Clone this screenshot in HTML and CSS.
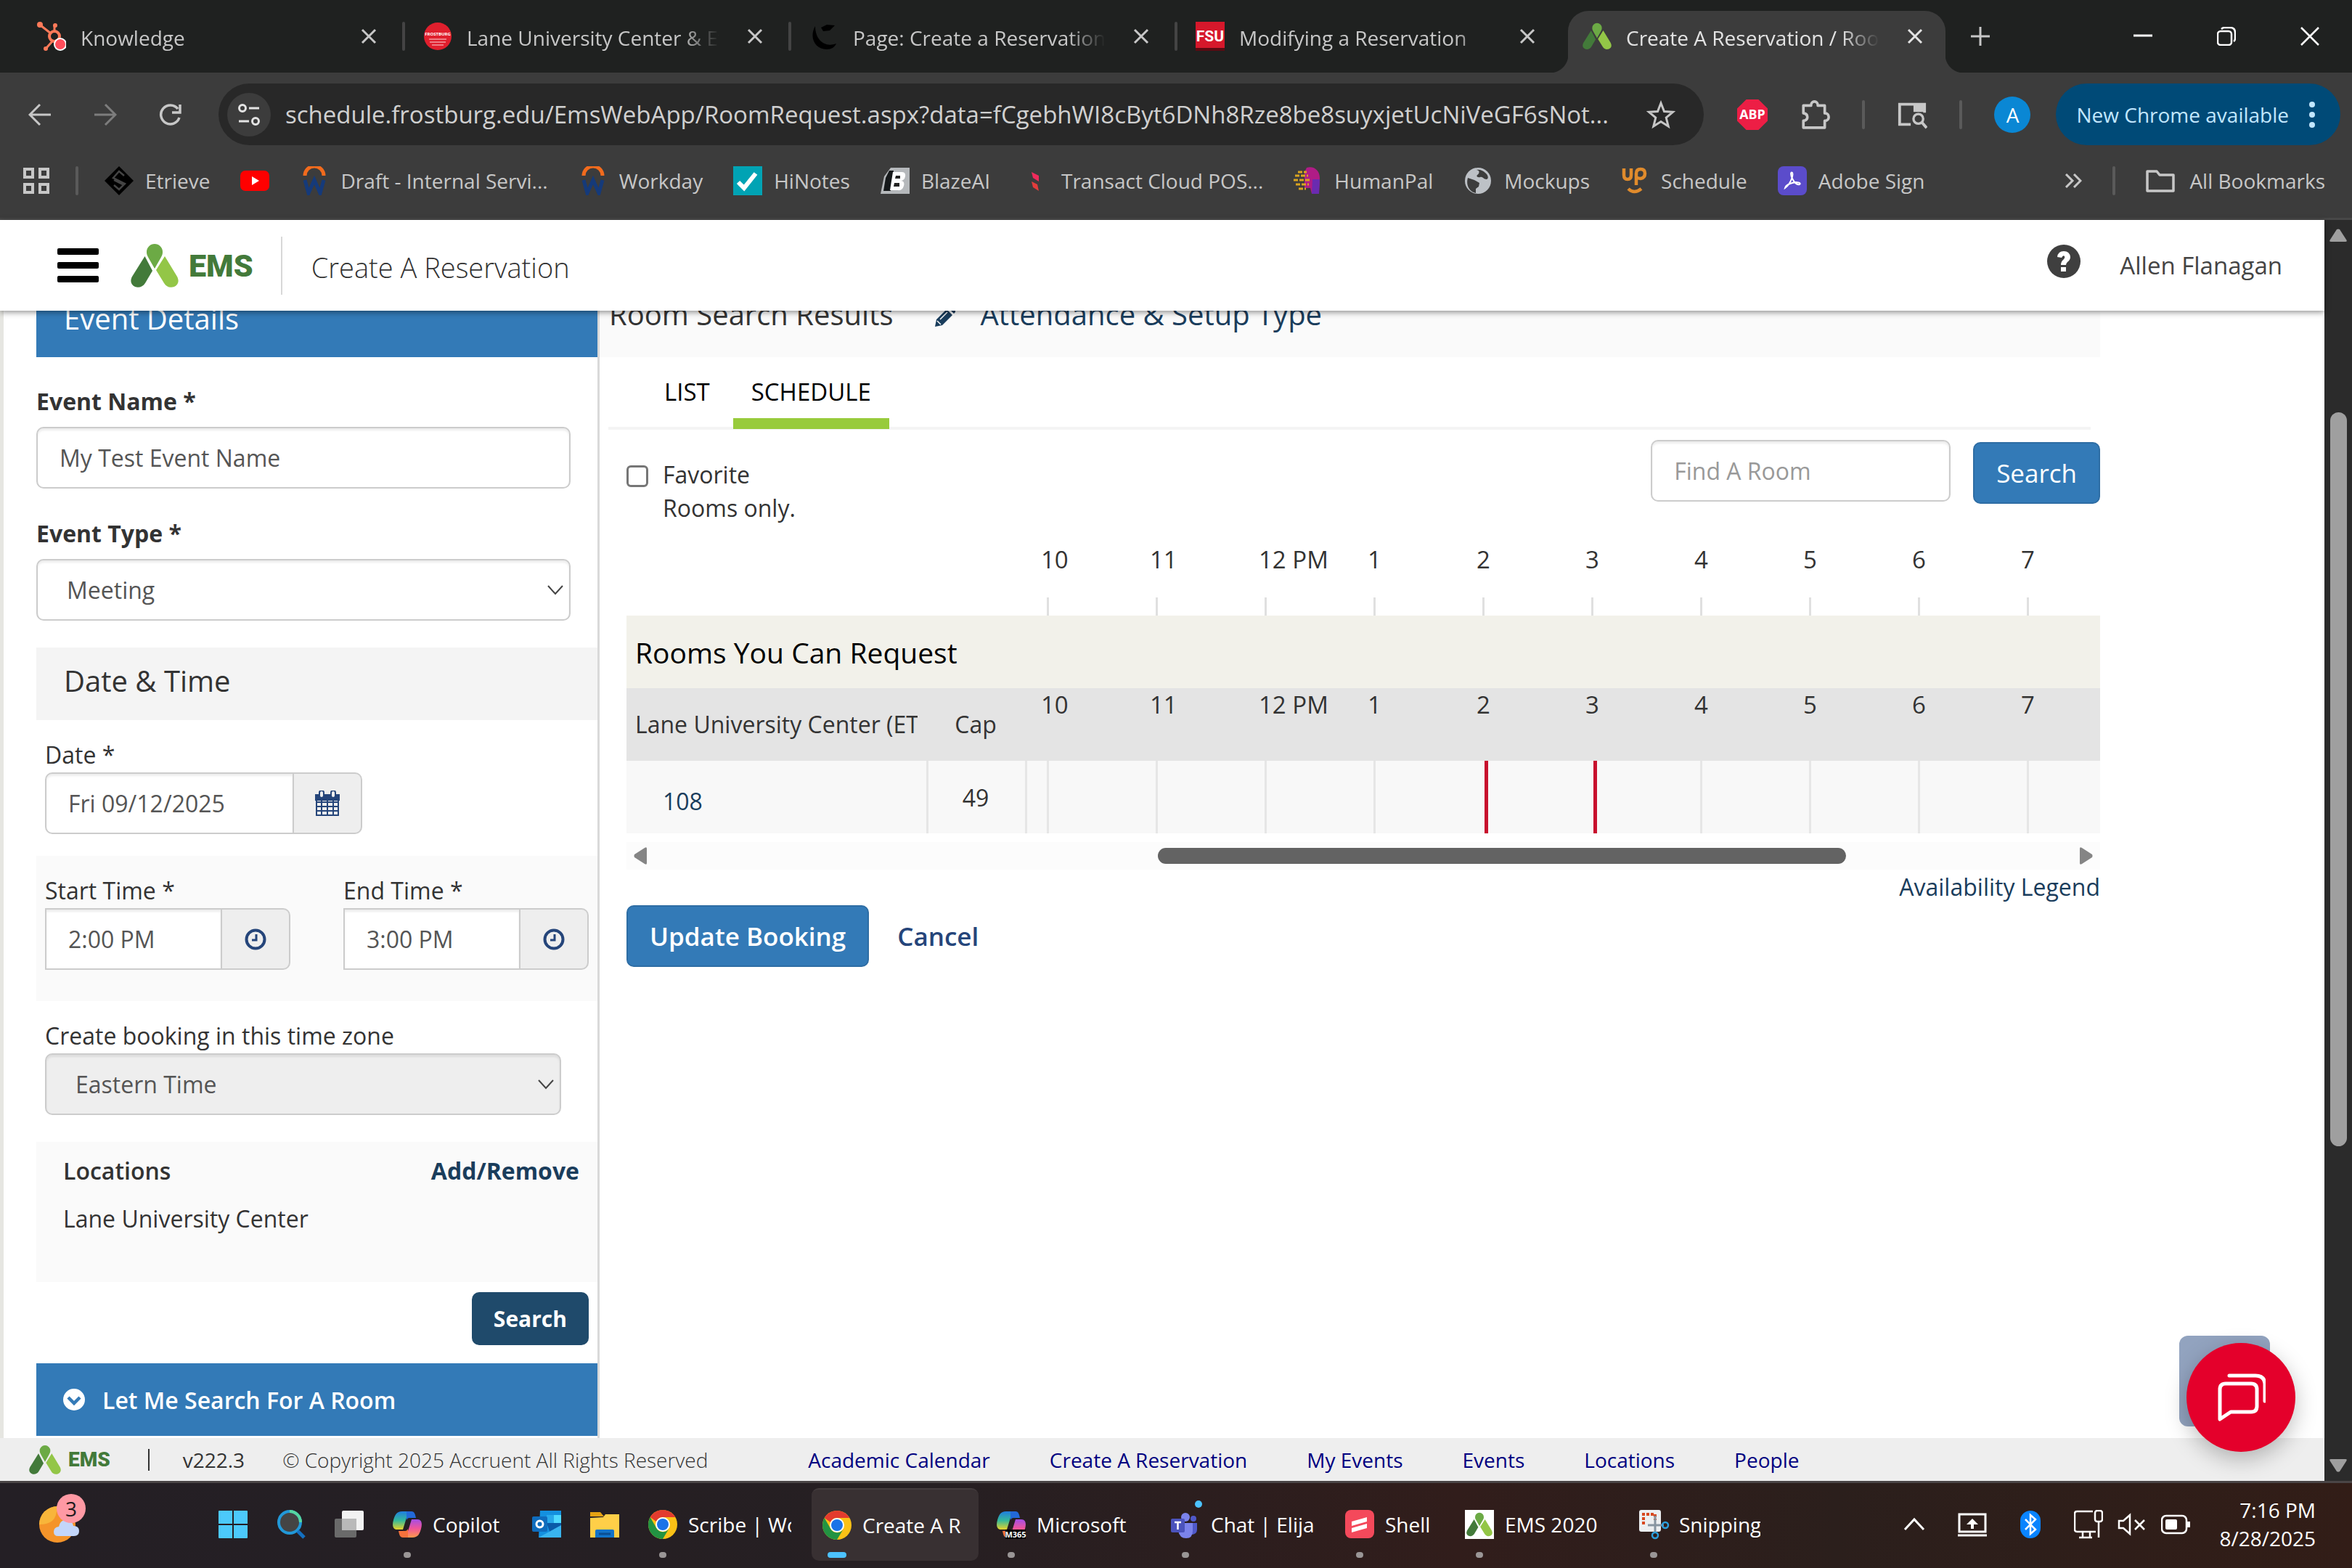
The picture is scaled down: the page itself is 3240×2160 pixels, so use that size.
FILE: index.html
```html
<!DOCTYPE html>
<html lang="en">
<head>
    <meta charset="UTF-8">
    <meta name="viewport" content="width=device-width, initial-scale=1.0">
    <title>Create A Reservation / Room Request</title>
    <link rel="stylesheet" href="styles.css">
</head>
<body>
    <!-- shared icons -->
    <svg class="defs" width="0" height="0" aria-hidden="true">
        <symbol id="ems" viewBox="0 0 66 60">
            <path fill="#6caa45" d="M22 11a11 11 0 0 1 22 0c0 4-1 5-3 9l-8 14-8-14c-2-4-3-5-3-9z"/>
            <path fill="#437a3a" d="M19.500 17 30 37 20 54c-3 5-9 7-14 5-6-3-7-8-4-14z"/>
            <path fill="#93c647" d="M47 17l17 28c3 6 2 11-4 14-6 2-11 0-14-5L35 36z"/>
        </symbol>
        <symbol id="close" viewBox="0 0 22 22">
            <path d="M2 2l18 18M20 2 2 20" stroke="currentColor" stroke-width="3" fill="none"/>
        </symbol>
        <symbol id="workday" viewBox="0 0 40 40">
            <path d="M7 13a13 13 0 0 1 26 0" stroke="#f26b1d" stroke-width="5" fill="none"/>
            <path d="M7 19l5 18 8-18 8 18 5-18" stroke="#153a7a" stroke-width="5" fill="none"/>
        </symbol>
        <symbol id="chrome" viewBox="0 0 40 40">
            <circle cx="20" cy="20" r="20" fill="#fbc116"/>
            <path fill="#e33b2e" d="M2.700 10A20 20 0 0 1 37.300 10H20a10 10 0 0 0-9 6z"/>
            <path fill="#229342" d="M2.700 10A20 20 0 0 0 20 40l9-15a10 10 0 0 1-17.700 0z"/>
            <circle cx="20" cy="20" r="10" fill="#fff"/>
            <circle cx="20" cy="20" r="8" fill="#1a73e8"/>
        </symbol>
        <symbol id="copilot" viewBox="0 0 40 40">
            <linearGradient id="cpA" x1="0" y1="0" x2="0" y2="1"><stop offset="0" stop-color="#1f7de0"/><stop offset=".5" stop-color="#35b99a"/><stop offset="1" stop-color="#e8d32a"/></linearGradient>
            <linearGradient id="cpB" x1="0" y1="0" x2="0" y2="1"><stop offset="0" stop-color="#a44ee6"/><stop offset=".5" stop-color="#f0559a"/><stop offset="1" stop-color="#ff9a4a"/></linearGradient>
            <path fill="url(#cpA)" d="M13 2h13c-5 2-6 6-8 12l-4 13H6c-6 0-7-6-5-13C3 7 5 2 13 2z"/>
            <path fill="#2269d8" d="M19 2h7c4 0 5 4 6 9h-9c-2 0-3 1-4 3z"/>
            <path fill="url(#cpB)" d="M27 38H14c5-2 6-6 8-12l4-13h8c6 0 7 6 5 13-2 7-4 12-12 12z"/>
            <path fill="#f5713c" d="M21 38h-7c-4 0-5-4-6-9h9c2 0 3-1 4-3z"/>
        </symbol>
        <symbol id="clock" viewBox="0 0 30 30">
            <circle cx="15" cy="15" r="12.500" stroke="currentColor" stroke-width="4" fill="none"/>
            <path d="M16 8v8h-6" stroke="currentColor" stroke-width="3" fill="none"/>
        </symbol>
        <symbol id="chevron" viewBox="0 0 22 14">
            <path d="M1 1l10 11L21 1" stroke="currentColor" stroke-width="2" fill="none"/>
        </symbol>
    </svg>

    <!-- browser tabs -->
    <div class="tabstrip">
        <div class="tab">
            <svg class="icon" viewBox="0 0 40 40"><g stroke="#ff7a59" fill="none"><path d="M5 5l14 11M24 14V5M21 27l-8 9" stroke-width="3"/><circle cx="24" cy="20" r="7" stroke-width="4"/></g><circle cx="4" cy="4" r="4" fill="#ff7a59"/><circle cx="25" cy="5" r="3" fill="#ff7a59"/><circle cx="12" cy="37" r="3" fill="#ff7a59"/><circle cx="32" cy="31" r="9" fill="#fff"/><circle cx="32" cy="31" r="7" fill="#ff4d5b"/></svg>
            <span class="tab-title">Knowledge</span>
            <button class="tab-close" aria-label="Close tab"><svg><use href="#close"/></svg></button>
        </div>
        <div class="tab">
            <svg class="icon" viewBox="0 0 40 40"><circle cx="20" cy="20" r="19" fill="#e01f2d"/><text x="20" y="19" text-anchor="middle" fill="#fff" class="mini">FROSTBURG</text><path d="M8 24h24M9 28h22M12 32h16" stroke="#f29aa0" stroke-width="1.500"/></svg>
            <span class="tab-title">Lane University Center &amp; Ev</span>
            <button class="tab-close" aria-label="Close tab"><svg><use href="#close"/></svg></button>
        </div>
        <div class="tab">
            <svg class="icon" viewBox="0 0 40 40"><path d="M8 6C-1 22 8 38 24 38c6 0 11-3 13-8-16 6-29-5-29-24zM16 8l8-4 11 1-7 7-9 1z" fill="#000"/></svg>
            <span class="tab-title">Page: Create a Reservation</span>
            <button class="tab-close" aria-label="Close tab"><svg><use href="#close"/></svg></button>
        </div>
        <div class="tab">
            <svg class="icon" viewBox="0 0 40 40"><path fill="#d6182b" d="M0 0h40v40H0z"/><path fill="#5c0a12" d="M0 36h40v4H0z"/><text x="20" y="27" text-anchor="middle" fill="#fff" class="fsu">FSU</text></svg>
            <span class="tab-title">Modifying a Reservation</span>
            <button class="tab-close" aria-label="Close tab"><svg><use href="#close"/></svg></button>
        </div>
        <div class="tab active">
            <svg class="icon"><use href="#ems"/></svg>
            <span class="tab-title">Create A Reservation / Roo</span>
            <button class="tab-close" aria-label="Close tab"><svg><use href="#close"/></svg></button>
        </div>
        <button class="new-tab" aria-label="New tab"><svg viewBox="0 0 26 26"><path d="M13 0v26M0 13h26" stroke="currentColor" stroke-width="3"/></svg></button>
        <div class="window-buttons">
            <button aria-label="Minimize"><svg viewBox="0 0 26 26"><path d="M0 12h26" stroke="#fff" stroke-width="3"/></svg></button>
            <button aria-label="Restore"><svg viewBox="0 0 26 26"><rect x="1" y="6" width="19" height="19" rx="4" stroke="#fff" stroke-width="2.500" fill="none"/><path d="M6 3q2-2 4-2h8q7 0 7 7v8q0 3-2 4" stroke="#fff" stroke-width="2.500" fill="none"/></svg></button>
            <button aria-label="Close"><svg viewBox="0 0 26 26"><path d="M1 1l24 24M25 1 1 25" stroke="#fff" stroke-width="2.500"/></svg></button>
        </div>
    </div>

    <!-- address bar -->
    <div class="toolbar">
        <button class="nav-button" aria-label="Back"><svg viewBox="0 0 32 32"><path d="M31 16H3M16 2 2 16l14 14" stroke="currentColor" stroke-width="3" fill="none"/></svg></button>
        <button class="nav-button off" aria-label="Forward"><svg viewBox="0 0 32 32"><path d="M1 16h28M16 2l14 14-14 14" stroke="currentColor" stroke-width="3" fill="none"/></svg></button>
        <button class="nav-button" aria-label="Reload"><svg viewBox="0 0 32 32"><path d="M28 20a13 13 0 1 1-2-12M29 2v11H18" stroke="currentColor" stroke-width="3.500" fill="none"/></svg></button>
        <div class="omnibox">
            <button class="site-info" aria-label="Site information"><svg viewBox="0 0 32 32"><g stroke="currentColor" stroke-width="3" fill="none"><circle cx="7" cy="7" r="4.500"/><path d="M16 7h14M2 25h14"/><circle cx="25" cy="25" r="4.500"/></g></svg></button>
            <input class="url" type="text" aria-label="Address" value="schedule.frostburg.edu/EmsWebApp/RoomRequest.aspx?data=fCgebhWI8cByt6DNh8Rze8be8suyxjetUcNiVeGF6sNot...">
            <button class="star" aria-label="Bookmark this tab"><svg viewBox="0 0 40 40"><path d="M20 4l4.500 11.500 12 .800-9.300 7.700 3 12L20 29.500 9.800 36l3-12-9.300-7.700 12-.800z" stroke="currentColor" stroke-width="3" fill="none"/></svg></button>
        </div>
        <div class="extensions">
            <button class="ext" aria-label="Adblock Plus"><svg viewBox="0 0 40 40"><path fill="#ed1e45" d="M12 0h16l12 12v16L28 40H12L0 28V12z"/><text x="20" y="26" font-size="17" text-anchor="middle" fill="#fff" class="abp">ABP</text></svg></button>
            <button class="ext" aria-label="Extensions"><svg viewBox="0 0 40 40"><path d="M5 8h10c0-7 9-7 9 0h9v10c7 0 7 10 0 10v9H5V28c7-1 7-9 0-10z" stroke="currentColor" stroke-width="3.500" fill="none" stroke-linejoin="round"/></svg></button>
            <span class="sep"></span>
            <button class="ext" aria-label="Lens"><svg viewBox="0 0 44 40"><path d="M20 34H4V5h36v12" stroke="currentColor" stroke-width="4" fill="none"/><path d="M24 5h17v11H24z" fill="currentColor"/><circle cx="31" cy="26" r="7" stroke="currentColor" stroke-width="3.500" fill="none"/><path d="M36 31l7 8" stroke="currentColor" stroke-width="4"/></svg></button>
            <span class="sep"></span>
            <button class="avatar">A</button>
        </div>
        <button class="update">New Chrome available <svg viewBox="0 0 8 36"><circle cx="4" cy="4" r="4"/><circle cx="4" cy="18" r="4"/><circle cx="4" cy="32" r="4"/></svg></button>
    </div>

    <!-- bookmarks -->
    <nav class="bookmarks">
        <button class="apps" aria-label="Apps"><svg viewBox="0 0 36 36"><path d="M2 2h11v11H2zM23 2h11v11H23zM2 23h11v11H2zM23 23h11v11H23z" stroke="currentColor" stroke-width="4" fill="none"/></svg></button>
        <span class="sep"></span>
        <a href="#"><svg class="icon" viewBox="0 0 40 40"><path fill="#000" d="M20 0l20 20-20 20L0 20z"/><path d="M27 13l-7-6-8 9 16 8-8 8-7-6M13 19l14 7" stroke="#444" stroke-width="2.500" fill="none"/></svg>Etrieve</a>
        <a href="#" aria-label="YouTube"><svg class="icon" viewBox="0 0 40 40"><rect y="6" width="40" height="28" rx="7" fill="#f00"/><path fill="#fff" d="M16 14l10 6-10 6z"/></svg></a>
        <a href="#"><svg class="icon"><use href="#workday"/></svg>Draft - Internal Servi...</a>
        <a href="#"><svg class="icon"><use href="#workday"/></svg>Workday</a>
        <a href="#"><svg class="icon" viewBox="0 0 40 40"><path fill="#00a3b4" d="M0 0h40v40H0z"/><path d="M7 22l8 8 16-20" stroke="#fff" stroke-width="6" fill="none"/></svg>HiNotes</a>
        <a href="#"><svg class="icon" viewBox="0 0 40 40"><path fill="#b5b8bb" d="M14 2h26v36H0l5-24z"/><path fill="#15181a" d="M12 6h6l-4 28H4l3-18z"/><path d="M17 8h12q6 0 5 6t-7 6q7 0 5 7t-8 6H13z" fill="#fff"/><path d="M21 13h6v4h-7zM19 23h7v5h-8z" fill="#222"/></svg>BlazeAI</a>
        <a href="#"><svg class="icon" viewBox="0 0 40 40"><path fill="#ef2b5b" d="M15 8l10 5v8l-8-5z"/><path fill="#e23c3c" d="M15 21l8 4 2 9-8-5z"/></svg>Transact Cloud POS...</a>
        <a href="#"><svg class="icon" viewBox="0 0 40 40"><path fill="#b01c86" d="M18 2c10-3 18 4 18 14 0 7-1 14-1 22H25l-2-8h-8V8z"/><path fill="#6a2bb0" d="M26 18h10l-1 20H25z"/><path d="M2 13h18M0 19h22M3 25h18M6 8h12M7 31h10" stroke="#d9a420" stroke-width="3" stroke-dasharray="6 2"/></svg>HumanPal</a>
        <a href="#"><svg class="icon" viewBox="0 0 40 40"><circle cx="20" cy="20" r="18" fill="#bdc1c6"/><path fill="#3c3c3c" d="M6 16l9 3 7 4-1 5-4 3v6C8 35 3 26 6 16zM18 5c6 1 3 6 1 7-2 2 1 4 4 3 4-1 4 3 9 3 3-1 2-6-2-9-3-3-8-5-12-4z"/></svg>Mockups</a>
        <a href="#"><svg class="icon" viewBox="0 0 40 40"><path d="M5 3v9q0 6 5 6t5-6V3M22 26V10q0-6 6-6t6 6-6 7q-3 0-6-2M11 31q8 8 18 0" stroke="#e08b2c" stroke-width="4.500" fill="none"/></svg>Schedule</a>
        <a href="#"><svg class="icon" viewBox="0 0 40 40"><rect width="40" height="40" rx="8" fill="#5b4ccb"/><path d="M10 30c6-4 12-16 10-21-2-2-3 2 0 8s6 9 10 8c3-2-4-4-10-2s-9 3-10 7z" stroke="#fff" stroke-width="2" fill="none"/></svg>Adobe Sign</a>
        <div class="bookmarks-end">
            <button aria-label="More bookmarks"><svg class="more" viewBox="0 0 24 20"><path d="M2 1l9 9-9 9M13 1l9 9-9 9" stroke="currentColor" stroke-width="3" fill="none"/></svg></button>
            <span class="sep"></span>
            <a href="#"><svg class="icon" viewBox="0 0 40 40"><path d="M2 7h13l4 5h19v22H2z" stroke="currentColor" stroke-width="3.500" fill="none" stroke-linejoin="round"/></svg>All Bookmarks</a>
        </div>
    </nav>

    <div class="window">
        <div class="page">
            <header class="header">
                <button class="menu" aria-label="Menu"><span></span><span></span><span></span></button>
                <a class="brand" href="#"><svg><use href="#ems"/></svg>EMS</a>
                <h1>Create A Reservation</h1>
                <button class="help" aria-label="Help"><svg viewBox="0 0 46 46"><circle cx="23" cy="23" r="23" fill="#3f3f3f"/><path d="M14 17q1-8 9-8t9 8q0 4-4 7-2 2-2 4h-7q0-5 4-8 2-2 1-4-2-2-4 2zM19 31h7v6h-7z" fill="#fff"/></svg></button>
                <a class="user" href="#">Allen Flanagan</a>
            </header>

            <div class="content">
                <aside class="sidebar">
                    <h2 class="bar bar-top">Event Details</h2>

                    <div class="fields">
                        <label class="strong" for="event-name">Event Name *</label>
                        <input class="control" id="event-name" type="text" value="My Test Event Name">
                        <label class="strong" for="event-type">Event Type *</label>
                        <div class="select">
                            <select class="control" id="event-type"><option>Meeting</option></select>
                            <svg><use href="#chevron"/></svg>
                        </div>
                    </div>

                    <h2 class="subhead">Date &amp; Time</h2>

                    <div class="block block-date">
                        <label for="date">Date *</label>
                        <div class="group group-date">
                            <input class="control" id="date" type="text" value="Fri 09/12/2025">
                            <button aria-label="Pick a date"><svg viewBox="0 0 34 36"><path d="M2 8h30v26H2zM2 16h30M2 22h30M2 28h30M9 14v20M17 14v20M25 14v20" stroke="currentColor" stroke-width="2" fill="none"/><path d="M0 5h34v9H0z" fill="currentColor"/><rect x="6" y="0" width="6" height="10" rx="3" fill="#eee" stroke="currentColor" stroke-width="2"/><rect x="22" y="0" width="6" height="10" rx="3" fill="#eee" stroke="currentColor" stroke-width="2"/></svg></button>
                        </div>
                    </div>

                    <div class="block block-time shaded">
                        <div>
                            <label for="start">Start Time *</label>
                            <div class="group">
                                <input class="control" id="start" type="text" value="2:00 PM">
                                <button aria-label="Pick start time"><svg class="clock"><use href="#clock"/></svg></button>
                            </div>
                        </div>
                        <div>
                            <label for="end">End Time *</label>
                            <div class="group">
                                <input class="control" id="end" type="text" value="3:00 PM">
                                <button aria-label="Pick end time"><svg class="clock"><use href="#clock"/></svg></button>
                            </div>
                        </div>
                    </div>

                    <div class="block block-zone">
                        <label for="zone">Create booking in this time zone</label>
                        <div class="select">
                            <select class="control" id="zone" disabled><option>Eastern Time</option></select>
                            <svg><use href="#chevron"/></svg>
                        </div>
                    </div>

                    <div class="locations shaded">
                        <div class="locations-head">
                            <span>Locations</span>
                            <a href="#">Add/Remove</a>
                        </div>
                        <p>Lane University Center</p>
                    </div>

                    <div class="sidebar-actions"><button class="search-dark">Search</button></div>

                    <button class="bar bar-bottom">
                        <svg viewBox="0 0 30 30"><circle cx="15" cy="15" r="15" fill="#fff"/><path d="M7 12l8 8 8-8" stroke="#337ab7" stroke-width="4.500" fill="none"/></svg>
                        Let Me Search For A Room
                    </button>
                </aside>

                <main class="results">
                    <div class="results-head">
                        <h2>Room Search Results</h2>
                        <a href="#"><svg viewBox="0 0 28 28"><path d="M0 28l2-10L16 4l8 8L10 26zM18 2l2-2q2-1 4 1l3 3q2 2 1 4l-2 2z" fill="currentColor"/><path d="M3 20l5 5M7 18 17 8" stroke="#fafafa" stroke-width="1.500"/></svg>Attendance &amp; Setup Type</a>
                    </div>

                    <div class="view-tabs">
                        <button>LIST</button>
                        <button class="selected">SCHEDULE</button>
                    </div>

                    <div class="results-body">
                        <div class="filters">
                            <input id="favorites" type="checkbox">
                            <label for="favorites">Favorite<br>Rooms only.</label>
                            <input class="control find" type="text" placeholder="Find A Room" aria-label="Find A Room">
                            <button class="primary">Search</button>
                        </div>

                        <table class="schedule">
                            <colgroup><col class="c-room"><col class="c-cap"><col class="c-pad"><col span="9" class="c-hour"><col></colgroup>
                            <tr class="ruler">
                                <td></td><td></td><td></td>
                                <th>10</th><th>11</th><th>12 PM</th><th>1</th><th>2</th><th>3</th><th>4</th><th>5</th><th>6</th><th>7</th>
                            </tr>
                            <tr class="section"><th colspan="13">Rooms You Can Request</th></tr>
                            <tr class="building">
                                <th class="name"><div>Lane University Center (ET)</div></th><th class="cap">Cap</th><td></td>
                                <th>10</th><th>11</th><th>12 PM</th><th>1</th><th>2</th><th>3</th><th>4</th><th>5</th><th>6</th><th>7</th>
                            </tr>
                            <tr class="room">
                                <td class="name"><a href="#">108</a></td><td class="cap">49</td><td class="pad"></td>
                                <td></td><td></td><td></td><td></td><td class="mark"></td><td class="mark"></td><td></td><td></td><td></td><td></td>
                            </tr>
                        </table>

                        <div class="hscroll">
                            <svg viewBox="0 0 18 24"><path d="M18 2v20q0 3-3 1L1 14q-1-2 0-4L15 1q3-2 3 1z"/></svg>
                            <div class="hscroll-track"><div class="hscroll-thumb"></div></div>
                            <svg viewBox="0 0 18 24"><path d="M0 2v20q0 3 3 1l14-9q1-2 0-4L3 1Q0-1 0 2z"/></svg>
                        </div>

                        <p class="legend"><a href="#">Availability Legend</a></p>

                        <div class="actions">
                            <button class="primary booking">Update Booking</button>
                            <a href="#">Cancel</a>
                        </div>
                    </div>
                </main>
            </div>

            <footer class="footer">
                <a class="brand small" href="#"><svg><use href="#ems"/></svg>EMS</a>
                <span class="rule"></span>
                <span class="version">v222.3</span>
                <span class="copyright">© Copyright 2025 Accruent All Rights Reserved</span>
                <nav>
                    <a href="#">Academic Calendar</a>
                    <a href="#">Create A Reservation</a>
                    <a href="#">My Events</a>
                    <a href="#">Events</a>
                    <a href="#">Locations</a>
                    <a href="#">People</a>
                </nav>
            </footer>

            <!-- floating buttons over the page corner -->
            <div class="to-top"></div>
            <button class="chat" aria-label="Chat"><svg viewBox="0 0 68 68"><path d="M5 64V23q0-8 8-8h35q8 0 8 8v23q0 8-8 8H20zM18 4h36q13 0 13 13v22" stroke="#fff" stroke-width="5" fill="none" stroke-linejoin="round" stroke-linecap="round"/></svg></button>
        </div>

        <div class="vscroll">
            <svg viewBox="0 0 24 18"><path d="M2 18h20q3 0 1-3L14 1q-2-1-4 0L1 15q-2 3 1 3z"/></svg>
            <div class="vscroll-thumb"></div>
            <svg viewBox="0 0 24 18"><path d="M2 0h20q3 0 1 3l-9 14q-2 1-4 0L1 3q-2-3 1-3z"/></svg>
        </div>
    </div>

    <!-- taskbar -->
    <div class="taskbar">
        <button class="weather" aria-label="Weather">
            <svg viewBox="0 0 56 52"><circle cx="25" cy="26" r="25" fill="#f5942a"/><path fill="#f8b53a" d="M25 1a25 25 0 0 0-25 25q12 0 18-5t7-20z"/><path fill="#c3d6fa" d="M26 42q-6 0-6-6t7-7q2-10 11-9 8 1 9 8 8 0 8 7t-7 7z"/></svg>
            <span class="badge">3</span>
        </button>
        <div class="tasks">
            <button class="task" aria-label="Start"><svg viewBox="0 0 40 40"><path fill="#4cc9fb" d="M0 2 q0-1 1-1h18v18H0zM21 1h18q1 0 1 1v17H21zM0 21h19v18H1q-1 0-1-1zM21 21h19v17q0 1-1 1H21z"/></svg></button>
            <button class="task" aria-label="Search"><svg viewBox="0 0 40 40"><circle cx="18" cy="17" r="15" fill="#444" stroke="#2298d8" stroke-width="4"/><path d="M18 2a15 15 0 0 1 15 15" stroke="#55d6a0" stroke-width="4" fill="none"/><path d="M29 29l9 9" stroke="#1470c0" stroke-width="5"/></svg></button>
            <button class="task" aria-label="Task view"><svg viewBox="0 0 40 40"><rect y="12" width="30" height="26" rx="2" fill="#6a6a6a"/><rect x="10" y="1" width="30" height="27" rx="2" fill="#f2f2f2"/><path fill="#b9b9b9" d="M10 12h20v16H10z"/></svg></button>
            <button class="task short run"><svg><use href="#copilot"/></svg><span>Copilot</span></button>
            <button class="task" aria-label="Outlook"><svg viewBox="0 0 40 40"><path fill="#1490df" d="M11 1h29v37H9z"/><path fill="#28a8ea" d="M20 7h10v11H20z"/><path fill="#50d9ff" d="M30 7h10v11H30z"/><path fill="#0a5aa8" d="M20 18h20v8L25 32z"/><path fill="#39b4ef" d="M9 38h31V21z"/><rect y="9" width="21" height="21" rx="2" fill="#0f6cbd"/><circle cx="10.500" cy="19.500" r="4.500" stroke="#fff" stroke-width="3" fill="none"/></svg></button>
            <button class="task" aria-label="File Explorer"><svg viewBox="0 0 40 40"><path fill="#e5a213" d="M0 3h14l5 6H0z"/><path fill="#ffcf48" d="M0 11l18-1 3-4h19v32H0z"/><path fill="#1173c9" d="M7 38V29q0-2 2-2h22q2 0 2 2v9z"/><path d="M12 33h16" stroke="#0b4e92" stroke-width="3"/></svg></button>
            <button class="task wide run"><svg><use href="#chrome"/></svg><span>Scribe | Wo</span></button>
            <button class="task wide run current"><svg><use href="#chrome"/></svg><span>Create A R</span></button>
            <button class="task wide run"><svg viewBox="0 0 40 40"><use href="#copilot"/><path fill="#000" d="M12 27h28v13H12z"/><text x="26" y="38" font-size="11" text-anchor="middle" fill="#fff" class="abp">M365</text></svg><span>Microsoft</span></button>
            <button class="task wide run"><svg viewBox="0 0 40 40"><circle cx="20" cy="10" r="6" fill="#7b83eb"/><circle cx="31" cy="12" r="4" fill="#5059c9"/><path fill="#5059c9" d="M24 18h12v9q0 7-8 7z"/><path fill="#7b83eb" d="M10 18h20v11q0 10-9 10T10 29z"/><rect y="12" width="19" height="19" rx="2" fill="#4b53bc"/><path d="M5 17h9M9.500 17v10" stroke="#fff" stroke-width="2.500"/><circle cx="38" cy="-8" r="5" fill="#4cc2ff"/></svg><span>Chat | Elija</span></button>
            <button class="task mid run"><svg viewBox="0 0 40 40"><rect width="40" height="39" rx="8" fill="#f4495b"/><path d="M9 16l21-6v6L9 22zM9 25l21-6v6L9 31z" fill="#fff"/></svg><span>Shell</span></button>
            <button class="task wide run"><svg viewBox="0 0 40 40"><path fill="#fff" d="M0 0h40v40H0z"/><use href="#ems" x="2" y="3" width="36" height="34"/></svg><span>EMS 2020</span></button>
            <button class="task last run"><svg viewBox="0 0 40 40"><rect width="30" height="30" rx="3" fill="#eceff1"/><path d="M6 20V6h16v8" stroke="#d8481f" stroke-width="4" stroke-dasharray="4 2" fill="none"/><path d="M22 8v22M12 21h22" stroke="#8795a1" stroke-width="3"/><circle cx="22" cy="35" r="4" stroke="#2c9fdc" stroke-width="2.500" fill="none"/><circle cx="36" cy="21" r="4" stroke="#2c9fdc" stroke-width="2.500" fill="none"/></svg><span>Snipping</span></button>
        </div>
        <div class="tray">
            <button aria-label="Hidden icons"><svg viewBox="0 0 40 40"><path d="M7 27l13-14 13 14" stroke="#fff" stroke-width="3" fill="none"/></svg></button>
            <button aria-label="Display"><svg viewBox="0 0 40 40"><path d="M2 6h36v24H2zM0 35h40" stroke="#fff" stroke-width="3" fill="none"/><path fill="#fff" d="M20 12l8 8h-6v6h-4v-6h-6z"/></svg></button>
            <button aria-label="Bluetooth"><svg viewBox="0 0 40 40"><rect x="6" y="1" width="28" height="38" rx="14" fill="#0a84ff"/><path d="M13 13l14 14-7 6V7l7 6-14 14" stroke="#fff" stroke-width="2.500" fill="none"/></svg></button>
            <button class="status" aria-label="Network, volume, battery">
                <svg viewBox="0 0 40 40"><path d="M26 2H4q-3 0-3 3v22q0 3 3 3h26M12 30v8M22 30v8M7 38h18M34 16v22" stroke="#fff" stroke-width="2.500" fill="none"/><rect x="29" y="1" width="10" height="15" rx="3" stroke="#fff" stroke-width="2.500" fill="none"/></svg>
                <svg viewBox="0 0 40 40"><path d="M2 15h6l9-8v26l-9-8H2zM24 14l13 13M37 14 24 27" stroke="#fff" stroke-width="2.500" fill="none"/></svg>
                <svg viewBox="0 0 40 40"><rect x="1" y="8" width="34" height="24" rx="6" stroke="#fff" stroke-width="2.500" fill="none"/><rect x="6" y="13" width="16" height="14" rx="2" fill="#fff"/><path d="M38 16v8" stroke="#fff" stroke-width="4"/></svg>
            </button>
            <div class="time">7:16 PM<br>8/28/2025</div>
        </div>
    </div>
</body>
</html>
```

FILE: styles.css
```css
* {
    box-sizing: border-box;
}

body {
    margin: 0;
    height: 100vh;
    display: flex;
    flex-direction: column;
    overflow: hidden;
    font-family: "Open Sans", "Noto Sans", sans-serif;
    font-size: 32px;
    color: #333;
    background-color: #fff;
}

button, input, select {
    font: inherit;
    color: inherit;
    margin: 0;
}

button {
    background: none;
    border: none;
    padding: 0;
    cursor: pointer;
}

a {
    text-decoration: none;
    color: #1a3d5c;
}

h1, h2, p {
    margin: 0;
    font-weight: 400;
}

svg {
    display: block;
    flex: none;
}

.defs {
    position: absolute;
}

.icon {
    width: 40px;
    height: 40px;
}

.mini {
    font-weight: 700;
    font-size: 6px;
}

.fsu {
    font: 700 21px "Roboto", sans-serif;
}

.abp {
    font-weight: 700;
}

.sep {
    width: 4px;
    height: 40px;
    border-radius: 2px;
    background-color: #5a5a5a;
}

/* browser chrome */
.tabstrip {
    height: 100px;
    flex: none;
    display: flex;
    background-color: #1f2120;
    color: #c7c7c7;
    font-size: 28px;
}

.tab {
    width: 532px;
    height: 100px;
    display: flex;
    align-items: center;
    gap: 20px;
    padding: 0 13px 0 51px;
    position: relative;
}

.tab:not(.active)::after {
    content: "";
    position: absolute;
    right: -26px;
    top: 30px;
    width: 4px;
    height: 40px;
    border-radius: 2px;
    background-color: #444;
}

.tab:nth-child(4)::after {
    display: none;
}

.tab-title {
    flex: 1;
    padding-top: 3px;
    margin-right: 18px;
    overflow: hidden;
    white-space: nowrap;
    mask-image: linear-gradient(90deg, #000 85%, transparent);
}

.tab-close svg {
    width: 22px;
    height: 22px;
}

.tab.active {
    height: 85px;
    width: 520px;
    margin-top: 15px;
    margin-left: 32px;
    padding: 0 31px 15px 20px;
    border-radius: 28px 28px 0 0;
    background-color: #3c3c3c;
    color: #e3e3e3;
}

.tab.active::before, .tab.active::after {
    content: "";
    position: absolute;
    bottom: 0;
    width: 25px;
    height: 25px;
}

.tab.active::before {
    left: -25px;
    background: radial-gradient(circle at 0 0, #1f2120 25px, #3c3c3c 26px);
}

.tab.active::after {
    right: -25px;
    background: radial-gradient(circle at 100% 0, #1f2120 25px, #3c3c3c 26px);
}

.new-tab {
    margin-left: 35px;
}

.new-tab svg, .window-buttons svg {
    width: 26px;
    height: 26px;
}

.window-buttons {
    display: flex;
    gap: 89px;
    margin-left: auto;
    margin-right: 45px;
}

.toolbar {
    height: 115px;
    flex: none;
    display: flex;
    align-items: center;
    padding: 0 16px 0 39px;
    background-color: #3c3c3c;
    color: #c7c7c7;
}

.nav-button {
    margin-right: 58px;
}

.nav-button svg {
    width: 32px;
    height: 32px;
}

.nav-button.off {
    color: #7d7d7d;
}

.omnibox {
    flex: 1;
    height: 85px;
    margin-left: -8px;
    display: flex;
    align-items: center;
    padding: 0 39px 0 12px;
    border-radius: 43px;
    background-color: #282828;
}

.site-info {
    width: 60px;
    height: 60px;
    display: grid;
    place-items: center;
    border-radius: 50%;
    background-color: #3c3c3c;
    color: #e3e3e3;
}

.site-info svg {
    width: 32px;
    height: 32px;
}

.url {
    flex: 1;
    min-width: 0;
    padding: 0 0 0 20px;
    border: none;
    background: none;
    font-size: 33px;
    color: #d0d0d0;
    text-overflow: ellipsis;
}

.star svg {
    width: 40px;
    height: 40px;
}

.extensions {
    display: flex;
    align-items: center;
    gap: 44px;
    padding: 0 35px 0 46px;
}

.ext svg {
    width: 42px;
    height: 42px;
}

.avatar {
    width: 50px;
    height: 50px;
    border-radius: 50%;
    background-color: #0a87d4;
    color: #fff;
    font-size: 28px;
}

.update {
    height: 85px;
    display: flex;
    align-items: center;
    gap: 28px;
    padding: 0 35px 0 28px;
    border-radius: 43px;
    background-color: #004a77;
    color: #c2e7ff;
    font-size: 28px;
}

.update svg {
    width: 8px;
    height: 36px;
    fill: currentColor;
}

.bookmarks {
    height: 88px;
    flex: none;
    display: flex;
    align-items: center;
    padding: 0 37px 18px 32px;
    background-color: #3c3c3c;
    border-bottom: 3px solid #484848;
    color: #c7c7c7;
    font-size: 28px;
}

.bookmarks a {
    display: flex;
    align-items: center;
    gap: 16px;
    margin-right: 42px;
    color: inherit;
    white-space: nowrap;
}

.apps svg {
    width: 36px;
    height: 36px;
}

.bookmarks > .sep {
    margin: 0 36px;
}

.bookmarks-end {
    display: flex;
    align-items: center;
    gap: 42px;
    margin-left: auto;
}

.bookmarks-end a {
    gap: 20px;
    margin-right: 0;
}

.more {
    width: 24px;
    height: 20px;
}

/* page */
.window {
    flex: 1;
    min-height: 0;
    display: flex;
}

.page {
    flex: 1;
    min-width: 0;
    display: flex;
    flex-direction: column;
    position: relative;
}

.header {
    height: 125px;
    flex: none;
    display: flex;
    align-items: center;
    padding: 0 58px 0 79px;
    background-color: #fff;
    box-shadow: 0 2px 8px rgba(0, 0, 0, 0.45);
    z-index: 1;
}

.menu {
    display: flex;
    flex-direction: column;
    gap: 10px;
    margin-right: 44px;
}

.menu span {
    width: 57px;
    height: 9px;
    border-radius: 2px;
    background-color: #000;
}

.brand {
    display: flex;
    align-items: center;
    gap: 14px;
    color: #437a3a;
    font: 900 43px "Roboto", sans-serif;
}

.brand svg {
    width: 66px;
    height: 60px;
}

.brand.small {
    gap: 10px;
    font-size: 28px;
}

.brand.small svg {
    width: 44px;
    height: 40px;
}

.header h1 {
    margin-left: 38px;
    padding: 4px 0 0 40px;
    border-left: 2px solid #d8d8d8;
    font-size: 38px;
    font-weight: 300;
    line-height: 76px;
}

.help {
    margin-left: auto;
    margin-right: 54px;
    padding-bottom: 12px;
}

.help svg {
    width: 46px;
    height: 46px;
}

.user {
    color: #444;
    font-size: 33px;
}

.content {
    flex: 1;
    min-height: 0;
    display: flex;
    margin-top: -36px;
    overflow: hidden;
}

.sidebar {
    width: 826px;
    flex: none;
    padding-left: 45px;
    border-left: 5px solid #e6e6e1;
    border-right: 3px solid #d9d9d9;
}

.bar {
    width: 100%;
    height: 100px;
    display: flex;
    align-items: center;
    background-color: #337ab7;
    color: #fff;
}

.bar-top {
    padding: 0 38px 8px;
    font-size: 40px;
}

.bar-bottom {
    gap: 24px;
    padding: 0 37px;
    font-weight: 600;
}

.bar-bottom svg {
    width: 30px;
    height: 30px;
}

.fields {
    padding: 36px 37px 37px 0;
}

.fields label {
    display: block;
    margin-bottom: 10px;
    line-height: 50px;
}

.fields .control + label {
    margin-top: 37px;
}

.strong {
    font-weight: 700;
}

.control {
    display: block;
    width: 100%;
    height: 85px;
    padding: 0 30px;
    border: 2px solid #ccc;
    border-radius: 10px;
    background-color: #fff;
    box-shadow: inset 0 3px 3px rgba(0, 0, 0, 0.075);
    color: #555;
}

.select {
    position: relative;
}

.select select {
    appearance: none;
    padding: 0 40px;
    opacity: 1;
}

.select select:disabled {
    background-color: #eee;
}

.select svg {
    position: absolute;
    right: 10px;
    top: 36px;
    width: 22px;
    height: 14px;
    color: #444;
}

.subhead {
    height: 100px;
    padding-left: 38px;
    background-color: #f4f4f4;
    font-size: 40px;
    line-height: 92px;
}

.shaded {
    background-color: #fafafa;
}

.block {
    padding: 24px 12px 0 12px;
}

.block label {
    display: block;
    line-height: 48px;
}

.block-date {
    padding-bottom: 30px;
}

.block-time {
    display: flex;
    justify-content: space-between;
    padding-bottom: 43px;
}

.block-zone {
    padding-right: 50px;
    padding-bottom: 37px;
}

.group {
    display: flex;
    width: 338px;
}

.group-date {
    width: 437px;
}

.group .control {
    flex: 1;
    min-width: 0;
    border-radius: 0;
}

.group-date .control {
    border-radius: 10px 0 0 10px;
}

.group button {
    width: 94px;
    display: grid;
    place-items: center;
    border: 2px solid #ccc;
    border-left: none;
    border-radius: 0 10px 10px 0;
    background-color: #eee;
    color: #25457a;
}

.group svg {
    width: 34px;
    height: 36px;
}

.group .clock {
    width: 30px;
    height: 30px;
}

.locations {
    padding: 16px 25px 63px 37px;
    line-height: 48px;
}

.locations-head {
    display: flex;
    justify-content: space-between;
    margin-bottom: 18px;
    font-weight: 600;
}

.locations-head a {
    font-weight: 700;
}

.sidebar-actions {
    padding: 14px 12px 25px 0;
    text-align: right;
}

.search-dark {
    height: 73px;
    padding: 0 30px;
    border-radius: 10px;
    background-color: #1f4a6b;
    color: #fff;
    font-size: 30px;
    font-weight: 700;
}

.results {
    flex: 1;
    margin-right: 309px;
}

.results-head {
    height: 100px;
    display: flex;
    align-items: center;
    gap: 58px;
    padding: 0 0 20px 13px;
    background-color: #fafafa;
    font-size: 40px;
}

.results-head h2 {
    font-size: 40px;
}

.results-head a {
    display: flex;
    align-items: center;
    gap: 34px;
}

.results-head svg {
    width: 28px;
    height: 28px;
    margin-top: 8px;
}

.view-tabs {
    height: 100px;
    display: flex;
    gap: 7px;
    margin: 0 13px 0 12px;
    padding-left: 52px;
    border-bottom: 4px solid #f4f4f4;
}

.view-tabs button {
    height: 99px;
    padding: 10px 25px 0;
    border-bottom: 15px solid transparent;
    color: #000;
    font-size: 33px;
}

.view-tabs .selected {
    border-color: #98cb3c;
}

.results-body {
    padding: 14px 0 0 37px;
}

.filters {
    height: 142px;
    display: flex;
    align-items: flex-start;
}

.filters input[type="checkbox"] {
    appearance: none;
    width: 30px;
    height: 30px;
    margin: 35px 20px 0 0;
    border: 3px solid #767676;
    border-radius: 6px;
}

.filters label {
    margin-top: 25px;
    line-height: 46px;
}

.find {
    width: 413px;
    margin-left: auto;
    margin-right: 31px;
}

.find::placeholder {
    color: #999;
}

.primary {
    height: 85px;
    padding: 0 30px;
    border: 2px solid #2e6da4;
    border-radius: 10px;
    background-color: #337ab7;
    color: #fff;
    font-size: 35px;
}

.filters .primary {
    margin-top: 3px;
}

.schedule {
    width: 100%;
    table-layout: fixed;
    border-collapse: collapse;
}

.c-room { width: 413px; }
.c-cap { width: 136px; }
.c-pad { width: 30px; }
.c-hour { width: 150px; }

.schedule tr {
    height: 100px;
}

.schedule th, .schedule td {
    padding: 0;
    font-weight: 400;
    text-align: left;
    white-space: nowrap;
}

.schedule .ruler th, .schedule .building th {
    vertical-align: top;
    line-height: 46px;
    font-size: 33px;
    text-indent: -8px;
}

.ruler th {
    background: linear-gradient(#e0e0e0, #e0e0e0) left bottom / 3px 25px no-repeat;
}

.schedule .section th {
    padding-left: 12px;
    background-color: #f2f1ea;
    color: #000;
    font-size: 39px;
}

.building {
    background-color: #e4e4e4;
}

.schedule .building .name, .schedule .building .cap {
    vertical-align: middle;
    font-size: 32px;
    text-indent: 0;
}

.building .name div {
    margin: 0 12px;
    overflow: hidden;
}

.schedule .cap {
    text-align: center;
}

.room {
    background-color: #f8f8f8;
}

.schedule .room .name {
    padding: 10px 0 0 50px;
}

.schedule .room td + td {
    background: linear-gradient(#e6e6e6, #e6e6e6) left / 3px 100% no-repeat;
}

.schedule .room .mark {
    background: linear-gradient(#c8102e, #c8102e) 3px 0 / 5px 100% no-repeat;
}

.hscroll {
    height: 38px;
    display: flex;
    align-items: center;
    justify-content: space-between;
    margin-top: 12px;
    padding: 0 10px;
    background-color: #fcfcfc;
}

.hscroll svg {
    width: 18px;
    height: 24px;
    fill: #858585;
}

.hscroll-track {
    flex: 1;
    padding: 0 16% 0 35%;
}

.hscroll-thumb {
    height: 22px;
    border-radius: 11px;
    background-color: #636363;
}

.legend {
    margin-top: 4px;
    line-height: 40px;
    text-align: right;
}

.actions {
    display: flex;
    align-items: center;
    gap: 39px;
    margin-top: 5px;
    font-size: 35px;
    font-weight: 600;
}

.booking {
    font-weight: 600;
}

.actions a {
    color: #25457a;
}

.footer {
    height: 59px;
    flex: none;
    display: flex;
    align-items: center;
    padding-left: 40px;
    background-color: #eee;
    font-size: 28px;
}

.rule {
    width: 2px;
    height: 30px;
    margin-left: 52px;
    background-color: #333;
}

.version {
    margin-left: 46px;
}

.copyright {
    margin-left: 52px;
    font-weight: 300;
}

.footer nav {
    display: flex;
    gap: 82px;
    margin-left: 138px;
}

.footer nav a {
    color: #000080;
}

.to-top {
    position: absolute;
    right: 75px;
    bottom: 75px;
    width: 125px;
    height: 125px;
    border-radius: 12px;
    background-color: #92a3bf;
}

.chat {
    position: absolute;
    right: 40px;
    bottom: 40px;
    width: 150px;
    height: 150px;
    display: grid;
    place-items: center;
    border-radius: 50%;
    background-color: #e4002b;
    box-shadow: 0 10px 30px rgba(0, 0, 0, 0.25);
}

.chat svg {
    width: 68px;
    height: 68px;
}

.vscroll {
    width: 38px;
    display: flex;
    flex-direction: column;
    align-items: center;
    padding: 12px 0;
    background-color: #2b2b2b;
}

.vscroll svg {
    width: 24px;
    height: 18px;
    fill: #9f9f9f;
}

.vscroll-thumb {
    width: 23px;
    height: 59%;
    margin-top: 235px;
    margin-bottom: auto;
    border-radius: 12px;
    background-color: #9f9f9f;
}

/* taskbar */
.taskbar {
    height: 120px;
    flex: none;
    display: flex;
    align-items: center;
    padding: 0 50px 4px 54px;
    border-top: 3px solid #4a4546;
    background: linear-gradient(90deg, #241f25, #261f22 40%, #311d1b 62%, #2b1f1c 78%, #321d17);
    color: #fff;
    font-size: 28px;
}

.weather {
    width: 64px;
    margin-right: 168px;
    position: relative;
}

.weather svg {
    width: 56px;
    height: 52px;
}

.badge {
    position: absolute;
    right: 0;
    top: -16px;
    width: 40px;
    height: 40px;
    border-radius: 50%;
    background-color: #ff99a4;
    color: #1f1a1c;
    font-size: 28px;
    line-height: 40px;
}

.tasks {
    display: flex;
}

.task {
    width: 80px;
    height: 100px;
    display: flex;
    align-items: center;
    gap: 15px;
    padding-left: 15px;
    border-radius: 10px;
    position: relative;
}

.task svg {
    width: 40px;
    height: 40px;
    overflow: visible;
}

.task span {
    overflow: hidden;
    white-space: nowrap;
    text-overflow: clip;
}

.task.wide {
    width: 240px;
    padding-right: 28px;
}

.task.short {
    width: 192px;
    padding-right: 30px;
}

.task.mid {
    width: 165px;
}

.task.last {
    width: 210px;
    padding-right: 28px;
}

.run::after {
    content: "";
    position: absolute;
    left: 30px;
    bottom: 4px;
    width: 10px;
    height: 8px;
    border-radius: 4px;
    background-color: #9a9696;
}

.task.current {
    width: 230px;
    margin-right: 10px;
    padding-right: 18px;
    background-color: #383032;
    border-top: 2px solid #443c3e;
}

.current::after {
    left: 22px;
    width: 26px;
    background-color: #4cc2ff;
}

.tray {
    display: flex;
    align-items: center;
    gap: 40px;
    margin-left: auto;
}

.tray svg {
    width: 40px;
    height: 40px;
}

.status {
    display: flex;
    gap: 20px;
}

.time {
    line-height: 39px;
    text-align: right;
}
```
